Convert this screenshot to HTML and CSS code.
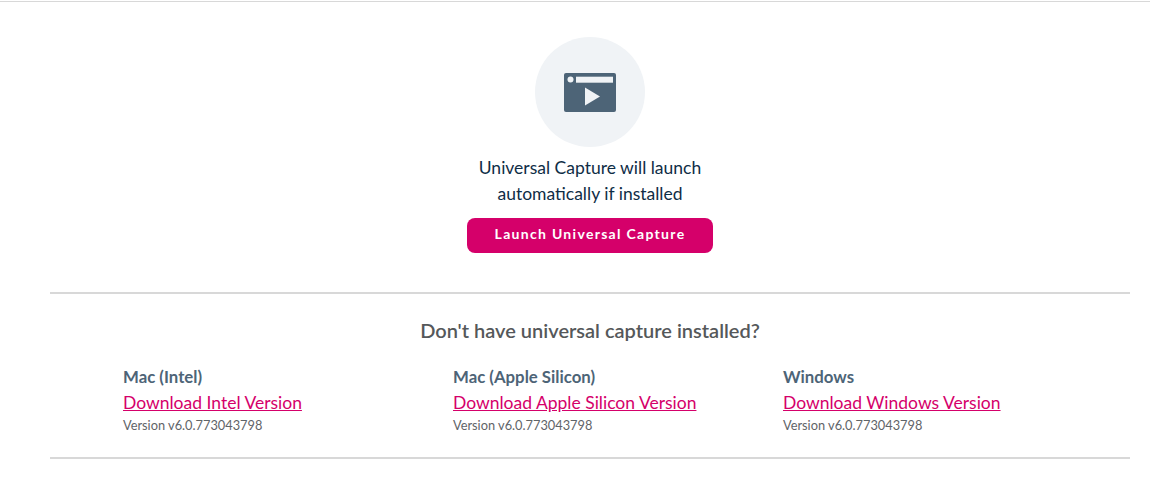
FILE: index.html
```html
<!DOCTYPE html>
<html lang="en">
<head>
    <meta charset="UTF-8">
    <title>Universal Capture</title>
    <link rel="stylesheet" href="styles.css">
</head>
<body>
    <div class="launch">
        <div class="icon-circle">
            <svg width="52" height="39" viewBox="0 0 52 39">
                <rect width="52" height="39" rx="2" fill="#4d6477"/>
                <circle cx="6.500" cy="6.500" r="3" fill="#f0f3f6"/>
                <rect x="12" y="3.700" width="37" height="6" fill="#f0f3f6"/>
                <polygon points="21,14.500 36,23.500 21,32.500" fill="#f0f3f6"/>
            </svg>
        </div>
        <p class="launch-text">Universal Capture will launch<br>automatically if installed</p>
        <button class="launch-btn">Launch Universal Capture</button>
    </div>
    <div class="downloads">
        <h3 class="downloads-title">Don't have universal capture installed?</h3>
        <div class="columns">
            <div class="column">
                <h4>Mac (Intel)</h4>
                <a href="#">Download Intel Version</a>
                <p>Version v6.0.773043798</p>
            </div>
            <div class="column">
                <h4>Mac (Apple Silicon)</h4>
                <a href="#">Download Apple Silicon Version</a>
                <p>Version v6.0.773043798</p>
            </div>
            <div class="column">
                <h4>Windows</h4>
                <a href="#">Download Windows Version</a>
                <p>Version v6.0.773043798</p>
            </div>
        </div>
    </div>
</body>
</html>
```
FILE: styles.css
```css
body {
    margin: 1px 0 0;
    background: #fff;
    font-family: Lato, "Liberation Sans", sans-serif;
    border-top: 1px solid #d8d8d8;
}

.launch {
    display: flex;
    flex-direction: column;
    align-items: center;
    margin: 0 20px 0 50px;
    padding-top: 35px;
    padding-bottom: 39px;
}
.icon-circle {
    width: 110px;
    height: 110px;
    border-radius: 50%;
    background: #f0f3f6;
    display: flex;
    align-items: center;
    justify-content: center;
}
.launch-text {
    margin: 8px 0 11px;
    font-size: 17.5px;
    line-height: 26px;
    text-align: center;
    color: #0f2d46;
}
.launch-btn {
    width: 246px;
    height: 35px;
    padding: 0 0 5px;
    border: 0;
    border-radius: 8px;
    background: #d5006a;
    color: #fff;
    font-family: inherit;
    font-size: 14px;
    font-weight: 700;
    letter-spacing: 1.3px;
}

.downloads {
    margin: 0 20px 0 50px;
    border-top: 2px solid #d8d8d8;
    border-bottom: 2px solid #d8d8d8;
    height: 163px;
}
.downloads-title {
    margin: 24px 0 0;
    font-size: 20px;
    line-height: 24px;
    font-weight: 600;
    text-align: center;
    color: #55585a;
}
.columns {
    display: grid;
    grid-template-columns: repeat(3, 330px);
    padding-left: 73px;
    margin-top: 25px;
}
.column h4 {
    margin: 0;
    font-size: 16.8px;
    line-height: 20px;
    font-weight: 700;
    color: #4d6477;
}
.column a {
    display: block;
    width: fit-content;
    margin-top: 6px;
    font-size: 17.5px;
    line-height: 20px;
    color: #d5006a;
}
.column p {
    margin: 4px 0 0;
    font-size: 12.8px;
    line-height: 16px;
    color: #5f6468;
}
```
